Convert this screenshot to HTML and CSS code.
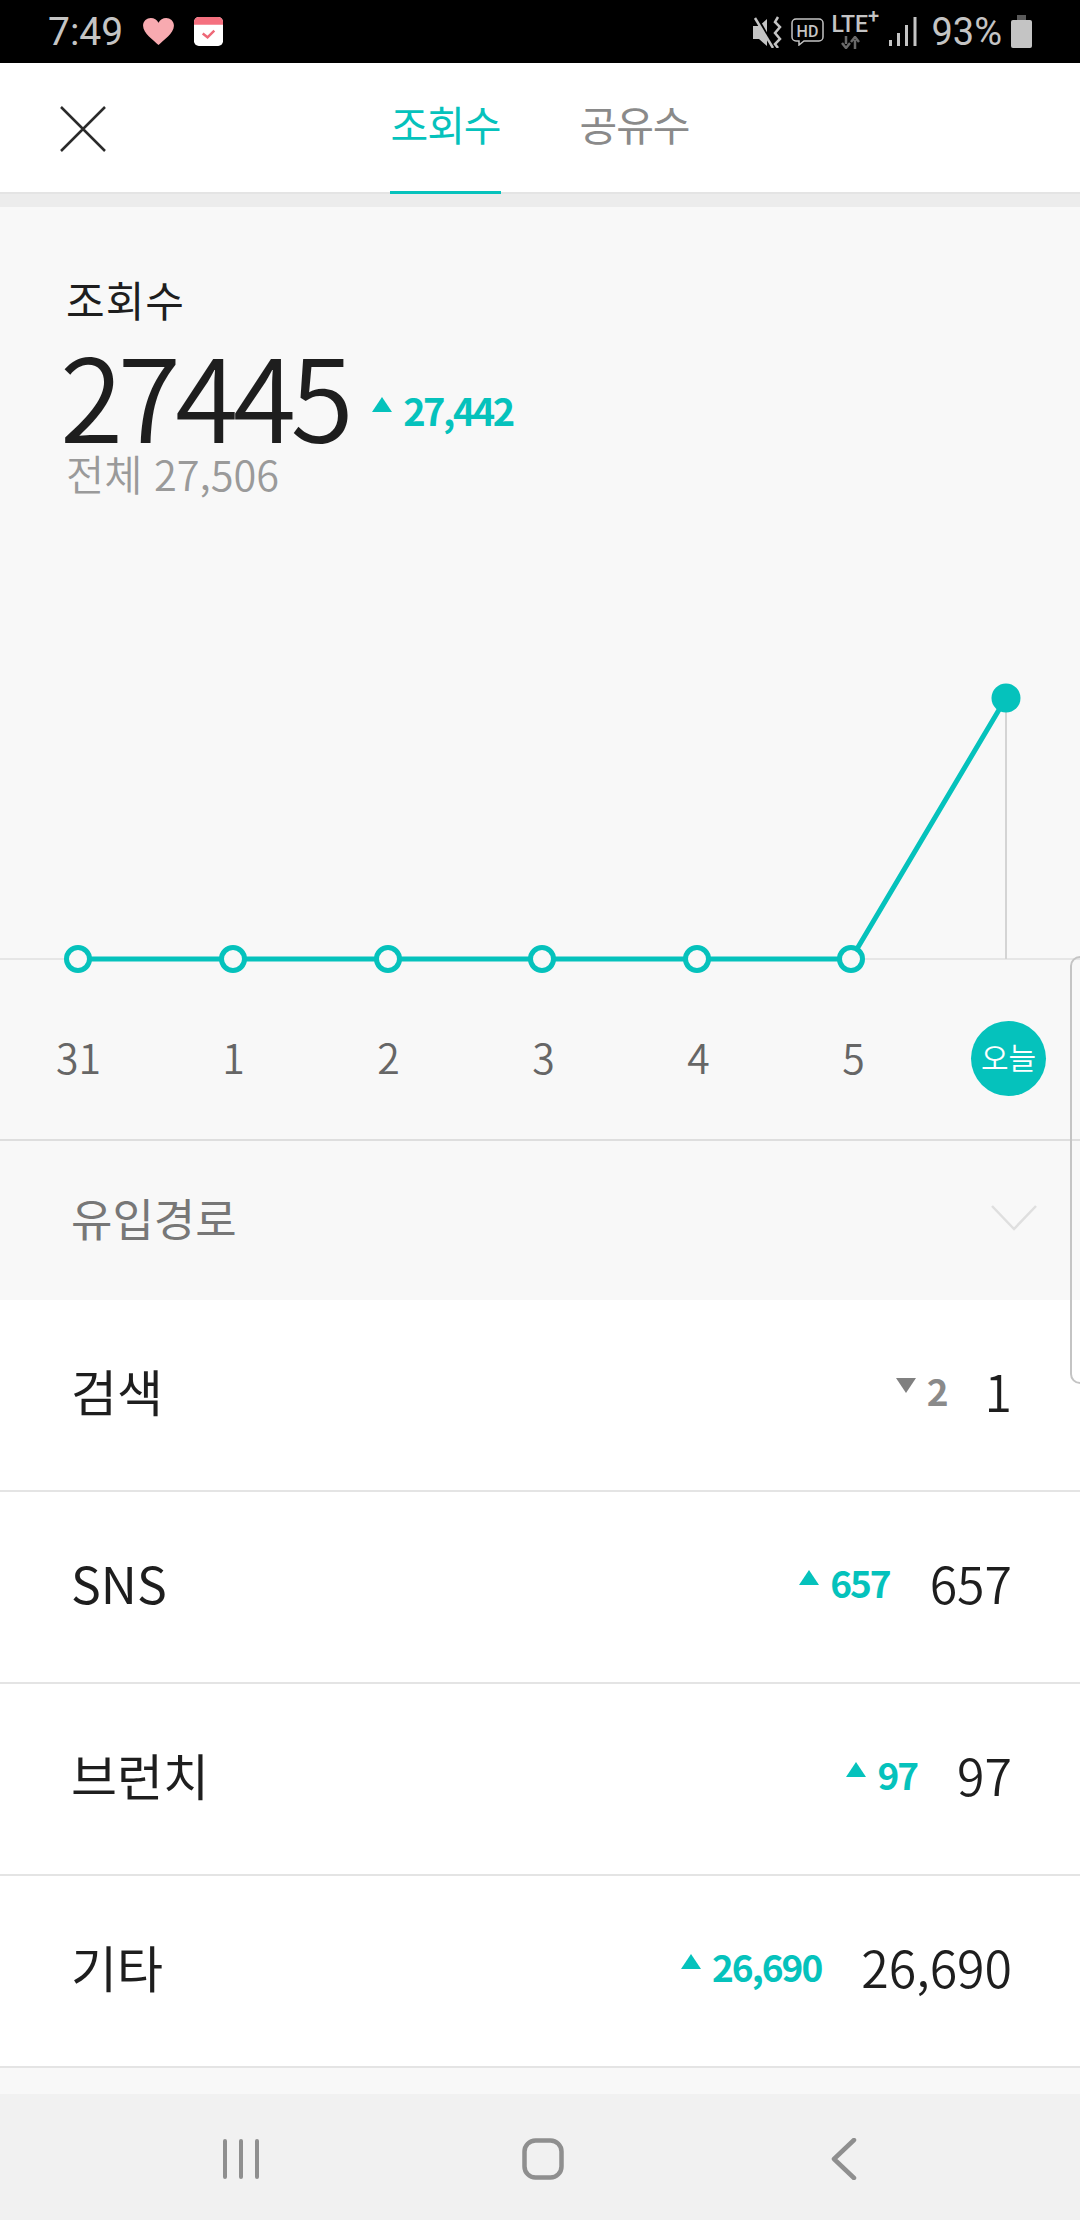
FILE: index.html
```html
<!DOCTYPE html>
<html lang="ko">
<head>
  <meta charset="UTF-8">
  <meta name="viewport" content="width=device-width, initial-scale=1.0">
  <title>조회수</title>
  <link rel="stylesheet" href="styles.css">
</head>
<body>
  <div class="page">
    <!-- Status bar -->
    <div class="status">
      <div class="status-left">
        <span class="clock">7:49</span>
        <svg class="heart" width="31" height="27" viewBox="0 0 32 28"><path d="M16 28C11 23 0 16 0 8 0 3 4 0 8 0c3.500 0 6.500 2 8 5 1.500-3 4.500-5 8-5 4 0 8 3 8 8 0 8-11 15-16 20z" fill="#f8aab0"/></svg>
        <svg class="cal" width="29" height="29" viewBox="0 0 30 30"><rect width="30" height="30" rx="5" fill="#fff"/><path d="M0 8V5a5 5 0 0 1 5-5h20a5 5 0 0 1 5 5v3z" fill="#f5707f"/><path d="M9 17l5 4 7-7" fill="none" stroke="#ee6877" stroke-width="2.500"/></svg>
      </div>
      <div class="status-right">
        <svg class="mute" width="30" height="32" viewBox="0 0 30 32"><path d="M0 10h6l8-7v27l-8-7H0z" fill="#c4c4c4"/><path d="M3 0l17 30" stroke="#000" stroke-width="3"/><path d="M2 2l18 30" stroke="#c4c4c4" stroke-width="2.500"/><path d="M25 1l-3 5 5 5-5 6 5 6-5 5 3 4" fill="none" stroke="#c4c4c4" stroke-width="2.500"/></svg>
        <svg class="hd" width="33" height="28" viewBox="0 0 33 28"><path d="M5 1h23a4 4 0 0 1 4 4v14a4 4 0 0 1-4 4H13l-5 4v-4H5a4 4 0 0 1-4-4V5a4 4 0 0 1 4-4z" fill="none" stroke="#c4c4c4" stroke-width="1.500"/><text x="16.500" y="18.500" text-anchor="middle" class="hd-text">HD</text></svg>
        <div class="lte">
          <span class="lte-text">LTE<sup>+</sup></span>
          <svg class="lte-arrows" width="20" height="13" viewBox="0 0 20 13"><path d="M6 0v8M2 7l4 5 4-5" fill="none" stroke="#6a6a6a" stroke-width="2.500"/><path d="M15 13V4M11 6l4-5 4 5" fill="none" stroke="#6a6a6a" stroke-width="2.500"/></svg>
        </div>
        <svg class="signal" width="28" height="29" viewBox="0 0 28 29"><rect x="0" y="23" width="3" height="6" fill="#c4c4c4"/><rect x="8" y="16" width="3" height="13" fill="#c4c4c4"/><rect x="16" y="8" width="3" height="21" fill="#c4c4c4"/><rect x="24.500" y="0" width="3" height="29" fill="#c4c4c4"/></svg>
        <span class="battery-pct">93%</span>
        <svg width="21" height="33" viewBox="0 0 21 33"><rect x="6" y="0" width="9" height="6" fill="#5a5a5a"/><rect x="0" y="5" width="21" height="28" rx="2" fill="#c4c4c4"/></svg>
      </div>
    </div>

    <!-- Top tabs -->
    <div class="topbar">
      <svg class="close" width="46" height="46" viewBox="0 0 46 46"><path d="M1 1l44 44M45 1L1 45" stroke="#2b2b2b" stroke-width="2.500"/></svg>
      <div class="tab tab-active">조회수</div>
      <div class="tab">공유수</div>
    </div>
    <div class="strip"></div>

    <!-- Summary -->
    <div class="summary">
      <div class="summary-title">조회수</div>
      <div class="summary-main">
        <span class="big-num">27445</span>
        <span class="delta delta-big"><i class="tri-up"></i>27,442</span>
      </div>
      <div class="summary-total">전체 27,506</div>
    </div>

    <!-- Chart -->
    <svg class="chart" width="1080" height="340" viewBox="0 0 1080 340">
      <line x1="0" y1="299" x2="1080" y2="299" stroke="#e6e6e6" stroke-width="2"/>
      <line x1="1006" y1="38" x2="1006" y2="299" stroke="#d4d4d4" stroke-width="2"/>
      <polyline points="78,299 851,299 1006,38" fill="none" stroke="#05c2bc" stroke-width="5"/>
      <g fill="#f8f8f8" stroke="#05c2bc" stroke-width="5">
        <circle cx="78" cy="299" r="11.500"/>
        <circle cx="233" cy="299" r="11.500"/>
        <circle cx="388" cy="299" r="11.500"/>
        <circle cx="542" cy="299" r="11.500"/>
        <circle cx="697" cy="299" r="11.500"/>
        <circle cx="851" cy="299" r="11.500"/>
      </g>
      <circle cx="1006" cy="38" r="14.500" fill="#05c2bc"/>
    </svg>
    <div class="axis">
      <span>31</span>
      <span>1</span>
      <span>2</span>
      <span>3</span>
      <span>4</span>
      <span>5</span>
      <span class="today">오늘</span>
    </div>

    <!-- Traffic sources -->
    <div class="source-head">
      <span>유입경로</span>
      <svg width="46" height="26" viewBox="0 0 46 26"><path d="M1 1l22 23L45 1" fill="none" stroke="#dfdfdf" stroke-width="2.500"/></svg>
    </div>
    <div class="row">
      <span class="row-name">검색</span>
      <span class="delta delta-down"><i class="tri-down"></i>2</span>
      <span class="row-num row-num-small">1</span>
    </div>
    <div class="row">
      <span class="row-name">SNS</span>
      <span class="delta"><i class="tri-up"></i>657</span>
      <span class="row-num">657</span>
    </div>
    <div class="row">
      <span class="row-name">브런치</span>
      <span class="delta"><i class="tri-up"></i>97</span>
      <span class="row-num">97</span>
    </div>
    <div class="row">
      <span class="row-name">기타</span>
      <span class="delta"><i class="tri-up"></i>26,690</span>
      <span class="row-num">26,690</span>
    </div>
    <div class="bottom-strip"></div>

    <!-- Navigation bar -->
    <div class="navbar">
      <svg width="40" height="40" viewBox="0 0 40 40"><path d="M3 2v36M19 2v36M35 2v36" stroke="#8f8f8f" stroke-width="4" stroke-linecap="round"/></svg>
      <svg width="42" height="42" viewBox="0 0 42 42"><rect x="2.500" y="2.500" width="37" height="37" rx="11" fill="none" stroke="#8f8f8f" stroke-width="4.500"/></svg>
      <svg width="26" height="42" viewBox="0 0 26 42"><path d="M23 2L3 21l20 19" fill="none" stroke="#8f8f8f" stroke-width="4.500" stroke-linecap="round" stroke-linejoin="round"/></svg>
    </div>

    <!-- Edge panel handle -->
    <div class="edge-handle"></div>
  </div>
</body>
</html>
```

FILE: styles.css
```css
/* Basic reset */
* {
  margin: 0;
  padding: 0;
  box-sizing: border-box;
}

body {
  font-family: "Noto Sans CJK KR", "Noto Sans", sans-serif;
  background-color: #f8f8f8;
  color: #1e1e1e;
}

.page {
  position: relative;
  width: 1080px;
  height: 2220px;
  overflow: hidden;
}

/* Status bar */
.status {
  height: 63px;
  background-color: #000;
  color: #c4c4c4;
  display: flex;
  justify-content: space-between;
  align-items: center;
  padding: 0 48px;
}

.status-left,
.status-right {
  display: flex;
  align-items: center;
}

.clock {
  font-family: Roboto, sans-serif;
  font-size: 39px;
  margin-right: 20px;
}

.cal {
  margin-left: 20px;
}

.mute {
  margin-right: 8px;
}

.hd {
  margin-right: 7px;
}

.hd-text {
  font-family: Roboto, sans-serif;
  font-size: 16px;
  font-weight: 500;
  fill: #c4c4c4;
}

.lte {
  display: flex;
  flex-direction: column;
  align-items: flex-start;
  width: 50px;
  margin-right: 8px;
}

.lte-text {
  font-family: Roboto, sans-serif;
  font-size: 23px;
  font-weight: 500;
  line-height: 22px;
  white-space: nowrap;
}

.lte-text sup {
  font-size: 20px;
  line-height: 0;
}

.lte-arrows {
  margin-left: 9px;
}

.signal {
  margin-right: 14px;
}

.battery-pct {
  font-family: Roboto, sans-serif;
  font-size: 38px;
  margin-right: 9px;
}

/* Top tabs */
.topbar {
  position: relative;
  height: 131px;
  background-color: #fff;
  border-bottom: 2px solid #e4e4e4;
  display: flex;
  justify-content: center;
  gap: 78px;
}

.close {
  position: absolute;
  left: 60px;
  top: 43px;
}

.tab {
  width: 111px;
  height: 131px;
  font-size: 41px;
  line-height: 120px;
  text-align: center;
  letter-spacing: -1px;
  white-space: nowrap;
  color: #8a8a8a;
}

.tab-active {
  color: #05c2bc;
  border-bottom: 3px solid #05c2bc;
}

.strip {
  height: 13px;
  background-color: #ececec;
}

/* Summary */
.summary {
  height: 453px;
  padding: 67px 0 0 66px;
}

.summary-title {
  font-size: 42px;
  line-height: 50px;
  letter-spacing: 1px;
}

.summary-main {
  display: flex;
  align-items: center;
  height: 109px;
  margin: 14px 0 0 -6px;
}

.big-num {
  font-size: 115px;
  font-weight: 350;
  letter-spacing: -5.500px;
  line-height: 104px;
}

.summary-total {
  font-size: 41.500px;
  font-weight: 350;
  line-height: 48px;
  margin-top: 2px;
  color: #9a9a9a;
}

.delta {
  display: flex;
  align-items: center;
  font-size: 37px;
  font-weight: 700;
  letter-spacing: -2px;
  color: #05c2bc;
}

.delta-big {
  font-size: 38px;
  letter-spacing: -2.500px;
  margin: 33px 0 0 24px;
}

.delta-down {
  color: #8a8a8a;
}

.tri-up,
.tri-down {
  display: block;
  width: 0;
  height: 0;
  border-left: 10px solid transparent;
  border-right: 10px solid transparent;
  margin-right: 11px;
}

.tri-up {
  border-bottom: 15px solid #05c2bc;
  margin-bottom: 10px;
}

.tri-down {
  border-top: 15px solid #808080;
  margin-bottom: 10px;
}

/* Chart */
.chart {
  display: block;
}

.axis {
  height: 161px;
  border-bottom: 2px solid #dedede;
  display: grid;
  grid-template-columns: repeat(7, 155px);
  align-items: center;
  padding: 0 0 2px 1px;
  margin-top: -20px;
  font-size: 41px;
  font-weight: 350;
  color: #666;
  text-align: center;
}

.axis span {
  padding-bottom: 6px;
}

.axis .today {
  width: 75px;
  height: 75px;
  padding-bottom: 0;
  line-height: 71px;
  border-radius: 50%;
  background-color: #05c2bc;
  color: #fff;
  font-size: 30px;
  justify-self: center;
}

/* Traffic sources */
.source-head {
  height: 159px;
  display: flex;
  justify-content: space-between;
  align-items: center;
  padding: 0 43px 6px 71px;
  font-size: 45px;
  color: #777;
}

.row {
  height: 192px;
  background-color: #fff;
  border-bottom: 2px solid #e4e4e4;
  display: flex;
  align-items: center;
  padding: 0 68px 10px 71px;
}

.row-name {
  font-size: 50px;
  margin-right: auto;
}

.row-num {
  font-size: 50px;
  font-weight: 350;
  margin-left: 40px;
}

.row-num-small {
  margin-left: 38px;
}

.bottom-strip {
  height: 26px;
}

/* Navigation bar */
.navbar {
  height: 126px;
  background-color: #f1f1f1;
  display: grid;
  grid-template-columns: repeat(3, 301px);
  justify-content: center;
  justify-items: center;
  align-items: center;
  padding: 4px 0 0 6px;
}

/* Edge panel handle */
.edge-handle {
  position: absolute;
  left: 1070px;
  top: 956px;
  width: 20px;
  height: 428px;
  border: 2px solid #c4c4c4;
  border-radius: 14px;
}
```
